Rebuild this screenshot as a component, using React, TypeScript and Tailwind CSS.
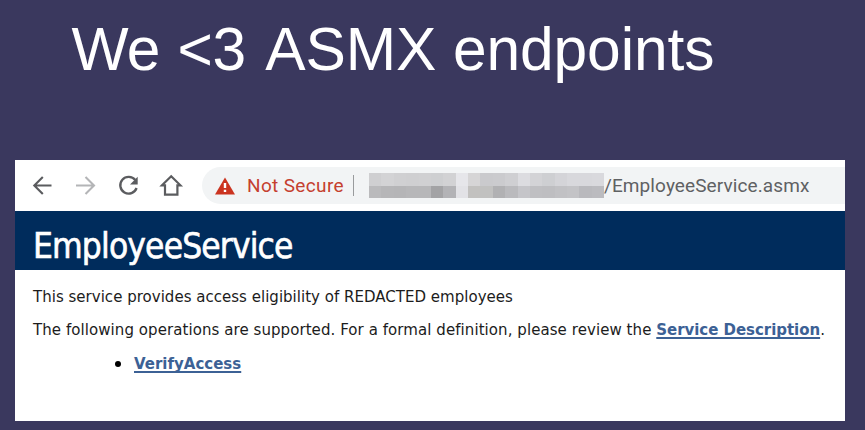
const mosaicTop = ['#cfcfd1', '#d3d3d5', '#d0d0d2', '#cfcfd1', '#d0d0d2', '#cecfd1', '#d2d2d4', '#e6e6ea', '#d6d5d6', '#cacacd', '#cbcbce', '#cfcfd2', '#dcdce0', '#d3d3d6', '#cecfd2', '#d4d4d8', '#d8d8dc', '#d8d8dc', '#d9d9dd'];
const mosaicBottom = ['#bababc', '#b6b6b8', '#b5b5b7', '#b7b7b9', '#b7b7b9', '#a3a3a5', '#b3b3b6', '#e2e2e6', '#c2c1bf', '#c1c1c0', '#b1b1b3', '#bababd', '#c5c5c9', '#bfbfc2', '#bebec1', '#c1c1c4', '#c3c3c6', '#b9b9bd', '#bbbbbf'];

function MosaicRow({ cells }: { cells: string[] }) {
  return (
    <div className="flex h-[12.5px]">
      {cells.map((c, i) => (
        <div key={i} className="flex-1" style={{ backgroundColor: c }} />
      ))}
    </div>
  );
}

function NavIcons() {
  return (
    <svg className="h-[51px] w-[187px] shrink-0" viewBox="0 0 187 51" fill="none" strokeWidth="2.1">
      <path d="M36.5 25.5H19.5M27.8 17L19.3 25.5L27.8 34" stroke="#5b5c5f" />
      <path d="M61 25.5H78M70.5 17L79 25.5L70.5 34" stroke="#b4b5b7" />
      <path d="M120.3 20A8.4 8.4 0 1 0 121.6 28" stroke="#5b5c5f" strokeWidth="2.3" />
      <path d="M122.7 16.8V24.5H115Z" fill="#5b5c5f" />
      <path d="M147 25.3L156.2 16.2L165.4 25.3H162.4V34.7H150V25.3Z" stroke="#5b5c5f" strokeWidth="2.2" />
    </svg>
  );
}

export default function App() {
  return (
    <div className="h-[430px] w-[865px] overflow-hidden bg-[#3a385e]">
      <h1 className="h-[160px] pl-[71.5px] pt-[14px] font-['Liberation_Sans',Arial,sans-serif] text-[60.5px] leading-[70px] whitespace-nowrap text-white">
        <span className="tracking-[-0.8px]">We </span>
        <span className="ml-[2px] tracking-[-0.4px]">&lt;3</span>
        <span className="ml-[6px] tracking-[-0.1px]"> ASMX endpoints</span>
      </h1>
      <main className="ml-[15px] h-[261px] w-[830px] overflow-hidden bg-white">
        <div className="flex h-[51px] items-center">
          <NavIcons />
          <div className="flex h-[37px] flex-1 items-center rounded-l-full bg-[#f2f4f5] font-[Roboto,sans-serif] text-[19px] whitespace-nowrap">
            <svg className="ml-[13px] h-[18px] w-[20px]" viewBox="0 0 20 18">
              <path d="M10 0.5L20 17.5H0Z" fill="#cb3420" />
              <path d="M10 6V11M10 12.8V15" stroke="#fff" strokeWidth="2.4" />
            </svg>
            <span className="ml-[12px] w-[98px] pt-px tracking-[0.35px] text-[#c5402f]">Not Secure</span>
            <div className="ml-[8px] h-[21px] w-px bg-[#999b9d]" />
            <div className="ml-[15px] w-[235px]">
              <MosaicRow cells={mosaicTop} />
              <MosaicRow cells={mosaicBottom} />
            </div>
            <span className="pt-px tracking-[0.1px] text-[#5f6163]">/EmployeeService.asmx</span>
          </div>
        </div>
        <h2 className="h-[59px] bg-[#002c5c] pl-[18px] pt-[14px] font-['DejaVu_Sans_Condensed','DejaVu_Sans',sans-serif] text-[35px] leading-[42px] tracking-[-0.85px] whitespace-nowrap text-white [-webkit-text-stroke:0.6px_white]">
          EmployeeService
        </h2>
        <div className="pl-[18px] pt-[17px] font-['DejaVu_Sans',Verdana,sans-serif] text-[15px] leading-[20px] whitespace-nowrap text-[#1c1c1c]">
          <p className="tracking-[0.02px]">This service provides access eligibility of REDACTED employees</p>
          <p className="mt-[13px] tracking-[0.07px]">
            The following operations are supported. For a formal definition, please review the{' '}
            <a className="font-bold tracking-[-0.04px] text-[#3c6195] underline decoration-[1.5px] underline-offset-2 [text-decoration-skip-ink:none]">Service Description</a>.
          </p>
          <div className="mt-[14px] flex items-center pl-[82px]">
            <span className="size-[6px] rounded-full bg-black" />
            <a className="ml-[13px] font-bold text-[#3c6195] underline decoration-[1.5px] underline-offset-2 [text-decoration-skip-ink:none]">VerifyAccess</a>
          </div>
        </div>
      </main>
    </div>
  );
}
